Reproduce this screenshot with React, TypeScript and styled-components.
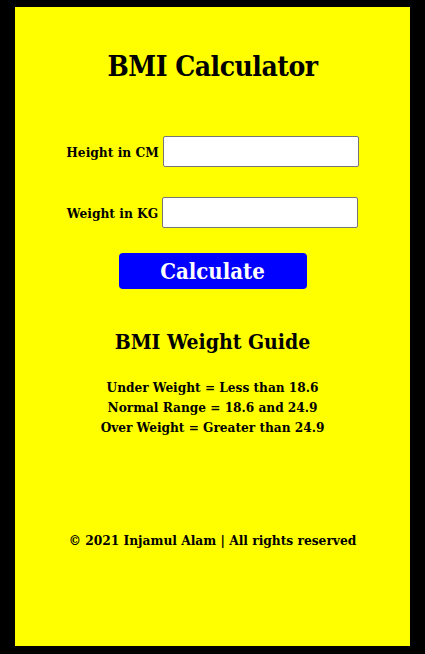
import React from "react";
import styled, { createGlobalStyle } from "styled-components";

const Global = createGlobalStyle`
  html, body { margin: 0; padding: 0; background: #000; }
  body { padding: 7px 15px 8px; }
  * { box-sizing: border-box; }
`;

const Card = styled.div`
  background: #ffff00;
  height: 639px;
  display: flex;
  flex-direction: column;
  align-items: center;
  font-family: "DejaVu Serif", serif;
  font-stretch: condensed;
  font-weight: bold;
  color: #000;
`;

const Title = styled.h1`
  margin: 42px 0 0;
  font-size: 28px;
  line-height: 36px;
  letter-spacing: -0.5px;
`;

const Form = styled.div`
  margin-top: 51px;
  display: flex;
  flex-direction: column;
  align-items: center;
  gap: 30px;
`;

const Row = styled.div`
  display: flex;
  align-items: center;
  gap: 4px;
`;

const Label = styled.label`
  font-size: 13.6px;
`;

const Input = styled.input`
  width: 196px;
  height: 31px;
  border: 1px solid #767676;
  border-radius: 2px;
  background: #fff;
`;

const Button = styled.button`
  margin-top: 25px;
  width: 188px;
  height: 36px;
  background: #0000ff;
  color: #fff;
  border: none;
  border-radius: 4px;
  font-family: inherit;
  font-stretch: condensed;
  font-weight: bold;
  font-size: 22px;
`;

const Guide = styled.h2`
  margin: 39px 0 0;
  font-size: 21px;
  line-height: 28px;
`;

const List = styled.div`
  margin-top: 21px;
  text-align: center;
  font-size: 13.5px;
  line-height: 20px;
`;

const Footer = styled.footer`
  margin-top: 95px;
  font-size: 13.6px;
`;

export default function App() {
  return (
    <>
      <Global />
      <Card>
        <Title>BMI Calculator</Title>
        <Form>
          <Row>
            <Label>Height in CM</Label>
            <Input type="text" />
          </Row>
          <Row>
            <Label>Weight in KG</Label>
            <Input type="text" />
          </Row>
        </Form>
        <Button>Calculate</Button>
        <Guide>BMI Weight Guide</Guide>
        <List>
          <div>Under Weight = Less than 18.6</div>
          <div>Normal Range = 18.6 and 24.9</div>
          <div>Over Weight = Greater than 24.9</div>
        </List>
        <Footer>© 2021 Injamul Alam | All rights reserved</Footer>
      </Card>
    </>
  );
}
